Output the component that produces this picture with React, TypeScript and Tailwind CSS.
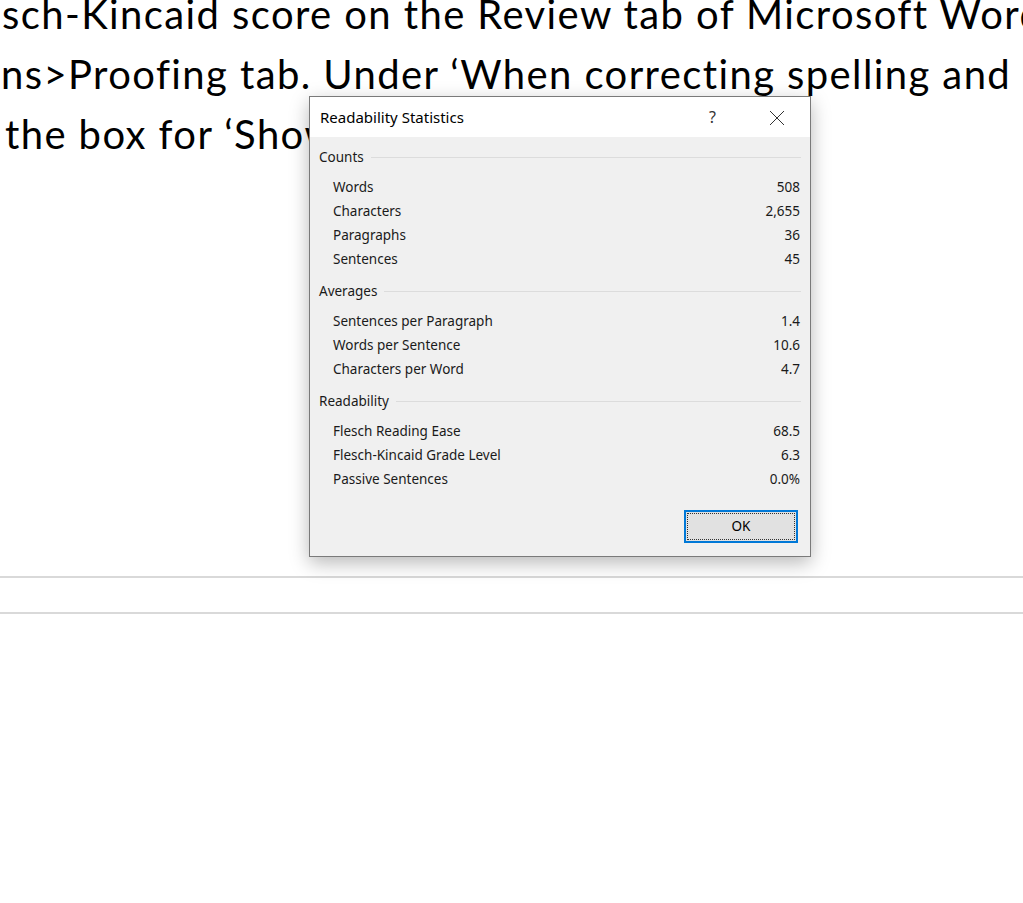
const counts = [
  ['Words', '508'],
  ['Characters', '2,655'],
  ['Paragraphs', '36'],
  ['Sentences', '45'],
]

const averages = [
  ['Sentences per Paragraph', '1.4'],
  ['Words per Sentence', '10.6'],
  ['Characters per Word', '4.7'],
]

const readability = [
  ['Flesch Reading Ease', '68.5'],
  ['Flesch-Kincaid Grade Level', '6.3'],
  ['Passive Sentences', '0.0%'],
]

function Group({ title, rows }: { title: string; rows: string[][] }) {
  return (
    <div>
      <div className="flex items-center h-[24px]">
        <span>{title}</span>
        <div className="flex-1 ml-[7px] h-px bg-[#dcdcdc]" />
      </div>
      <div className="pt-[6px] pb-[8px]">
        {rows.map(([label, value]) => (
          <div key={label} className="flex justify-between items-center h-[24px] pl-[14px] pr-[1px]">
            <span>{label}</span>
            <span>{value}</span>
          </div>
        ))}
      </div>
    </div>
  )
}

export default function App() {
  return (
    <div className="relative w-[1023px] h-[903px] bg-white overflow-hidden">
      <div
        className="-mt-[16px] text-[40px] leading-[60px] tracking-[1.4px] text-black whitespace-nowrap"
        style={{ fontFamily: 'Lato, "Open Sans", sans-serif' }}
      >
        <p className="pl-[2px]">sch-Kincaid score on the Review tab of Microsoft Word</p>
        <p className="pl-[1px]">ns&gt;Proofing tab. Under ‘When correcting spelling and</p>
        <p className="pl-[5px]">the box for ‘Show</p>
      </div>

      <div className="mt-[412px] h-[38px] border-t-2 border-b-2 border-[#d9d9d9]" />

      <div
        className="absolute left-[309px] top-[96px] w-[502px] h-[461px] border border-[#7a7a7a] bg-[#f0f0f0] shadow-[0_6px_18px_rgba(0,0,0,0.28)] text-[13.5px] text-[#1a1a1a] flex flex-col"
        style={{ fontFamily: '"Noto Sans", "Open Sans", sans-serif' }}
      >
        <div className="h-[40px] bg-white flex items-center pl-[10px] pr-[25px]">
          <span className="text-[15px] text-black flex-1">Readability Statistics</span>
          <span className="text-[16px] text-[#333] mr-[53px]">?</span>
          <svg width="16" height="16" viewBox="0 0 16 16" className="mt-[1px]">
            <path d="M1 1 L15 15 M15 1 L1 15" stroke="#333" strokeWidth="1" fill="none" />
          </svg>
        </div>
        <div className="px-[9px] pt-[8px] flex-1 flex flex-col">
          <Group title="Counts" rows={counts} />
          <Group title="Averages" rows={averages} />
          <Group title="Readability" rows={readability} />
          <div className="flex justify-end mt-[11px] mr-[3px]">
            <button className="w-[114px] h-[33px] border-2 border-[#0078d7] bg-[#e1e1e1] p-[1px]">
              <div className="w-full h-full border border-dotted border-[#333] flex items-center justify-center text-[13.5px] text-black">
                OK
              </div>
            </button>
          </div>
        </div>
      </div>
    </div>
  )
}
